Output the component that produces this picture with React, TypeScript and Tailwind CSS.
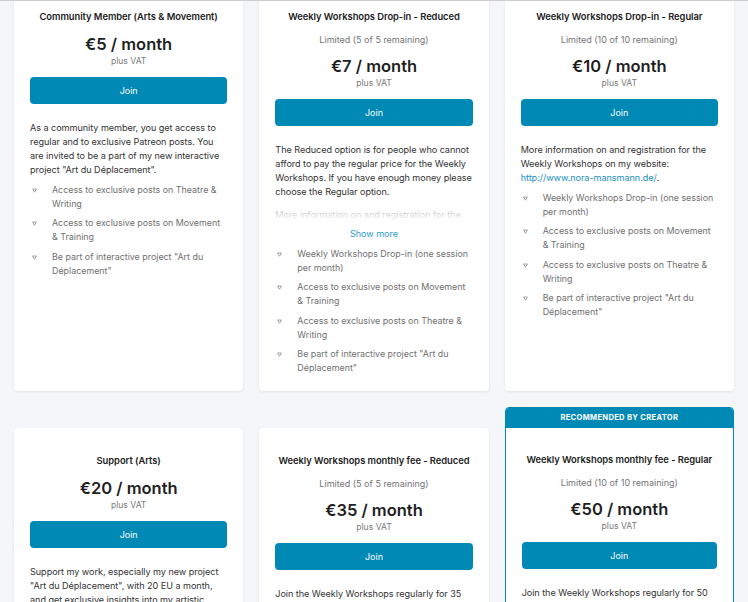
import React from 'react';

type Tier = {
  title: string;
  limited?: string;
  price: string;
  paragraphs: React.ReactNode[];
  collapsed?: boolean;
  benefits: string[];
  recommended?: boolean;
};

const ART = 'Be part of interactive project "Art du Déplacement"';
const THEATRE = 'Access to exclusive posts on Theatre & Writing';
const MOVEMENT = 'Access to exclusive posts on Movement & Training';
const DROPIN = 'Weekly Workshops Drop-in (one session per month)';

const tiers: Tier[] = [
  {
    title: 'Community Member (Arts & Movement)',
    price: '€5 / month',
    paragraphs: [
      'As a community member, you get access to regular and to exclusive Patreon posts. You are invited to be a part of my new interactive project "Art du Déplacement".',
    ],
    benefits: [THEATRE, MOVEMENT, ART],
  },
  {
    title: 'Weekly Workshops Drop-in - Reduced',
    limited: 'Limited (5 of 5 remaining)',
    price: '€7 / month',
    paragraphs: [
      'The Reduced option is for people who cannot afford to pay the regular price for the Weekly Workshops. If you have enough money please choose the Regular option.',
      'More information on and registration for the Weekly Workshops on my website: http://www.nora-mansmann.de/.',
    ],
    collapsed: true,
    benefits: [DROPIN, MOVEMENT, THEATRE, ART],
  },
  {
    title: 'Weekly Workshops Drop-in - Regular',
    limited: 'Limited (10 of 10 remaining)',
    price: '€10 / month',
    paragraphs: [
      <>
        More information on and registration for the Weekly Workshops on my website:{' '}
        <a className="text-[#1b8fbd]">http://www.nora-mansmann.de/</a>.
      </>,
    ],
    benefits: [DROPIN, MOVEMENT, THEATRE, ART],
  },
  {
    title: 'Support (Arts)',
    price: '€20 / month',
    paragraphs: [
      'Support my work, especially my new project "Art du Déplacement", with 20 EU a month, and get exclusive insights into my artistic process and the development of my projects.',
    ],
    benefits: [THEATRE, ART],
  },
  {
    title: 'Weekly Workshops monthly fee - Reduced',
    limited: 'Limited (5 of 5 remaining)',
    price: '€35 / month',
    paragraphs: [
      'Join the Weekly Workshops regularly for 35 EU a month. The Reduced option is for people who cannot afford the regular price.',
    ],
    benefits: [MOVEMENT, THEATRE, ART],
  },
  {
    title: 'Weekly Workshops monthly fee - Regular',
    limited: 'Limited (10 of 10 remaining)',
    price: '€50 / month',
    paragraphs: [
      'Join the Weekly Workshops regularly for 50 EU a month and take part in every session.',
    ],
    benefits: [MOVEMENT, THEATRE, ART],
    recommended: true,
  },
];

const Marker = () => (
  <svg width="5" height="5" viewBox="0 0 5 5" className="mt-[5px] ml-[2px] shrink-0">
    <path d="M0.6 1 L4.4 1 L2.5 4.2 Z" fill="none" stroke="#8a8a8a" strokeWidth="0.8" strokeLinejoin="round" />
  </svg>
);

const TierCard: React.FC<{ tier: Tier }> = ({ tier }) => {
  const body = (
    <div className="flex flex-col px-4 pt-[26px] pb-4">
      <h3 className="text-center text-[9.4px] font-semibold leading-[14px] tracking-[-0.05px] text-[#222]">
        {tier.title}
      </h3>
      {tier.limited && (
        <p className="mt-[9px] text-center text-[9px] leading-[14px] text-[#757575]">{tier.limited}</p>
      )}
      <div
        className={`text-center text-[16.5px] font-semibold leading-[20px] text-[#1f1f1f] ${
          tier.limited ? 'mt-[9px]' : 'mt-[10px]'
        }`}
      >
        {tier.price}
      </div>
      <div className="mt-[1px] text-center text-[8.6px] leading-[12px] text-[#7a7a7a]">plus VAT</div>
      <button className="mt-[10px] h-[27px] w-full rounded-[4px] bg-[#0089b5] text-[9px] text-white">
        Join
      </button>

      <div className={tier.collapsed ? 'relative mt-[17px] max-h-[79px] overflow-hidden' : 'mt-[17px]'}>
        {tier.paragraphs.map((p, i) => (
          <p
            key={i}
            className={`text-[9.1px] leading-[14px] tracking-[-0.05px] text-[#333] ${i > 0 ? 'mt-[9px]' : ''}`}
          >
            {p}
          </p>
        ))}
        {tier.collapsed && (
          <div className="absolute inset-x-0 bottom-0 h-[22px] bg-gradient-to-b from-white/40 to-white" />
        )}
      </div>
      {tier.collapsed && (
        <div className="mt-[5px] text-center text-[9px] leading-[14px] text-[#2a9ccd]">Show more</div>
      )}

      <ul className="mt-[6px] flex flex-col gap-[5.4px]">
        {tier.benefits.map((b, i) => (
          <li key={i} className="flex text-[8.9px] leading-[14px] text-[#707070]">
            <Marker />
            <span className="ml-[15px]">{b}</span>
          </li>
        ))}
      </ul>
    </div>
  );

  if (tier.recommended) {
    return (
      <div className="h-full overflow-hidden rounded-[4px] border border-[#0089b5] bg-white">
        <div className="flex h-[20px] items-center justify-center bg-[#0089b5] text-[7.6px] font-bold tracking-[0.3px] text-white">
          RECOMMENDED BY CREATOR
        </div>
        <div className="-mt-px">{body}</div>
      </div>
    );
  }

  return <div className="h-full rounded-[4px] bg-white shadow-[0_1px_3px_rgba(0,0,0,0.08)]">{body}</div>;
};

export default function App() {
  const rows = [tiers.slice(0, 3), tiers.slice(3, 6)];

  return (
    <div className="min-h-screen overflow-hidden bg-[#f5f6fa] font-['Inter',sans-serif]">
      <div className="fixed inset-x-0 top-0 z-10 h-px bg-[#cdcdcd]" />
      <div className="-mt-4 flex flex-col gap-4 px-[14px]">
        {rows.map((row, r) => {
          const hasRec = row.some((t) => t.recommended);
          return (
            <div key={r} className="grid grid-cols-3 items-stretch gap-4">
              {row.map((t, i) => (
                <div key={i} className={hasRec && !t.recommended ? 'pt-[21px]' : ''}>
                  <TierCard tier={t} />
                </div>
              ))}
            </div>
          );
        })}
      </div>
    </div>
  );
}
